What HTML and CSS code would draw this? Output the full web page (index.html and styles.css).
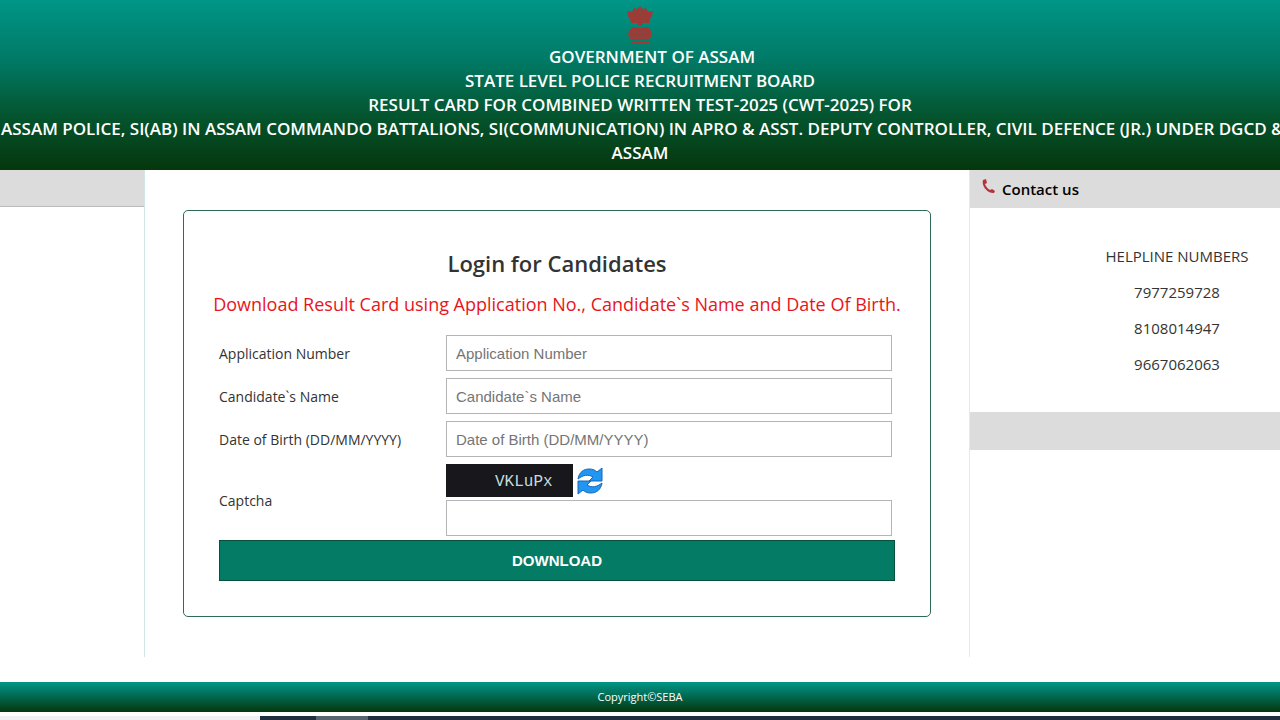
FILE: index.html
```
<!DOCTYPE html>
<html lang="en">
<head>
    <meta charset="UTF-8">
    <meta name="viewport" content="width=device-width, initial-scale=1.0">
    <title>State Level Police Recruitment Board</title>
    <link rel="stylesheet" href="styles.css">
</head>
<body>

<header class="header">
    <svg class="emblem" viewBox="0 0 28 38" aria-hidden="true">
        <path d="M1 6l5 1 2-4 3 1 3-3 3 3 3-1 2 4 5-1-1 5-2 3-1 4H5l-1-4-2-3z"/>
        <path d="M12 17h4v4h-4z"/>
        <path d="M3 26c2-4 6-5 9-3h4c3-2 7-1 9 3l1 4-3 5H5l-3-5z"/>
        <path d="M5 36h18v2H5z"/>
        <path class="cut" d="M8 8l2 4M20 8l-2 4M14 5v6M9 15h3M16 15h3M6 28l4-2 2 4M22 28l-4-2-2 4M14 25v3M4 32h6M12 32h4M18 32h6"/>
    </svg>
    <h1>
        <span class="line first">GOVERNMENT OF ASSAM</span>
        <span class="line">STATE LEVEL POLICE RECRUITMENT BOARD</span>
        <span class="line">RESULT CARD FOR COMBINED WRITTEN TEST-2025 (CWT-2025) FOR</span>
        <span class="line posts">ASSAM POLICE, SI(AB) IN ASSAM COMMANDO BATTALIONS, SI(COMMUNICATION) IN APRO &amp; ASST. DEPUTY CONTROLLER, CIVIL DEFENCE (JR.) UNDER DGCD &amp;</span>
        <span class="line">ASSAM</span>
    </h1>
</header>

<div class="content">
    <aside class="left">
        <div class="bar"></div>
    </aside>

    <main class="middle">
        <form class="login" id="loginForm">
            <h2>Login for Candidates</h2>
            <p class="note">Download Result Card using Application No., Candidate`s Name and Date Of Birth.</p>

            <div class="row">
                <label for="appNo">Application Number</label>
                <input type="text" id="appNo" name="appNo" placeholder="Application Number">
            </div>
            <div class="row">
                <label for="candName">Candidate`s Name</label>
                <input type="text" id="candName" name="candName" placeholder="Candidate`s Name">
            </div>
            <div class="row">
                <label for="dob">Date of Birth (DD/MM/YYYY)</label>
                <input type="text" id="dob" name="dob" placeholder="Date of Birth (DD/MM/YYYY)">
            </div>
            <div class="row captcha-row">
                <label for="captcha">Captcha</label>
                <div>
                    <div class="captcha">
                        <span class="code">VKLuPx</span>
                        <button type="button" class="refresh" aria-label="Refresh captcha">
                            <svg viewBox="0 0 26 28">
                                <path d="M1 12C2 5 7 2 12 2c4 0 6 1 8 3l5-4v13H12l4-4c-5-3-10-2-15 2z"/>
                                <path d="M25 16c-1 7-6 10-11 10-4 0-6-1-8-3l-5 4V14h13l-4 4c5 3 10 2 15-2z"/>
                            </svg>
                        </button>
                    </div>
                    <input type="text" id="captcha" name="captcha">
                </div>
            </div>

            <button type="submit" class="download">DOWNLOAD</button>
        </form>
    </main>

    <aside class="right">
        <div class="bar">
            <svg class="phone" viewBox="0 0 14 16" aria-hidden="true">
                <path d="M1 1l3-1 1 4-2 1c1 3 3 5 5 6l2-1 3 2-1 2C7 15-1 8 1 1z"/>
            </svg>
            <h3>Contact us</h3>
        </div>
        <div class="helpline">
            <p>HELPLINE NUMBERS</p>
            <p>7977259728</p>
            <p>8108014947</p>
            <p>9667062063</p>
        </div>
        <div class="bar"></div>
    </aside>
</div>

<footer class="footer">Copyright©SEBA</footer>
<div class="taskbar">
    <div class="search"></div>
    <div class="active"></div>
</div>

</body>
</html>
```
FILE: styles.css
```
* {
    box-sizing: border-box;
}
body {
    font-family: 'Open Sans', sans-serif;
    margin: 0;
    color: #333;
    background: #fff;
    min-height: 100vh;
    display: flex;
    flex-direction: column;
    overflow: hidden;
}
h1, h2, h3, p {
    margin: 0;
    font-weight: 400;
}

/* Header */
.header {
    background: linear-gradient(#009688, #007a66 35%, #04552f 68%, #06360c);
    color: #fff;
    text-align: center;
    padding: 5px 0;
}
.emblem {
    display: block;
    width: 28px;
    height: 38px;
    margin: 0 auto 2px;
    fill: #a03a36;
}
.emblem .cut {
    fill: none;
    stroke: #6c5446;
}
.header h1 {
    font-size: 17px;
    font-weight: 600;
    line-height: 24px;
}
.line {
    display: block;
    white-space: nowrap;
}
.first {
    padding-left: 24px;
}
.posts {
    text-align: left;
    padding-left: 1px;
}

/* Columns */
.content {
    display: grid;
    grid-template-columns: 144px minmax(0, 1fr) 310px;
    min-height: 487px;
    margin-bottom: 25px;
}
.bar {
    display: flex;
    align-items: center;
    height: 38px;
    padding: 0 12px;
    background: #dcdcdc;
}
.left .bar {
    height: 37px;
    border-bottom: 1px solid #bbb;
}
.middle {
    border-left: 1px solid #cfe6e4;
    border-right: 1px solid #dfecea;
    padding: 40px 38px 0;
}

/* Login form */
.login {
    border: 1px solid #2f6a5b;
    border-radius: 5px;
    padding: 35px;
}
.login h2 {
    font-size: 22px;
    font-weight: 600;
    line-height: 34px;
    text-align: center;
}
.note {
    display: flex;
    justify-content: center;
    color: #e8141c;
    font-size: 18px;
    line-height: 24px;
    margin: 12px 0 19px;
    white-space: nowrap;
}
.row {
    display: grid;
    grid-template-columns: 227px 1fr;
    align-items: center;
    margin: 0 3px 7px 0;
}
.captcha-row {
    margin-bottom: 4px;
}
label {
    font-size: 14px;
}
.row input {
    display: block;
    width: 100%;
    height: 36px;
    padding: 0 9px;
    border: 1px solid #b5b5b5;
    background: #fff;
    font-family: 'Liberation Sans', Arial, sans-serif;
    font-size: 15px;
}
.row input::placeholder {
    color: #757575;
}
.captcha {
    display: flex;
    align-items: center;
    gap: 4px;
    height: 33px;
    margin-bottom: 3px;
}
.code {
    width: 127px;
    height: 33px;
    line-height: 36px;
    padding-left: 49px;
    background: #17171c;
    color: #c4dcdc;
    font-family: 'Liberation Mono', monospace;
    font-size: 16px;
}
.refresh {
    width: 26px;
    height: 28px;
    padding: 0;
    border: 0;
    background: none;
    cursor: pointer;
}
.refresh svg {
    display: block;
    fill: #2196f3;
    stroke: #1767b5;
}
.download {
    display: block;
    width: 100%;
    height: 41px;
    border: 1px solid #06503c;
    background: #047b64;
    color: #fff;
    font-family: 'Liberation Sans', Arial, sans-serif;
    font-size: 15px;
    font-weight: bold;
    cursor: pointer;
}

/* Contact column */
.phone {
    width: 14px;
    height: 16px;
    margin: 0 6px 4px 0;
    fill: #b8323a;
}
.right h3 {
    color: #000;
    font-size: 15px;
    font-weight: 600;
}
.helpline {
    padding: 30px 0 30px 104px;
    text-align: center;
    font-size: 15px;
    line-height: 36px;
}

/* Footer */
.footer {
    background: linear-gradient(#009688, #00705a 40%, #06360c);
    color: #fff;
    font-size: 11px;
    line-height: 30px;
    text-align: center;
}
.taskbar {
    display: flex;
    height: 4px;
    margin-top: 4px;
    background: #20303f;
}
.search {
    width: 260px;
    background: #f0f0f2;
}
.active {
    width: 52px;
    margin-left: 56px;
    background: #566670;
}
```
